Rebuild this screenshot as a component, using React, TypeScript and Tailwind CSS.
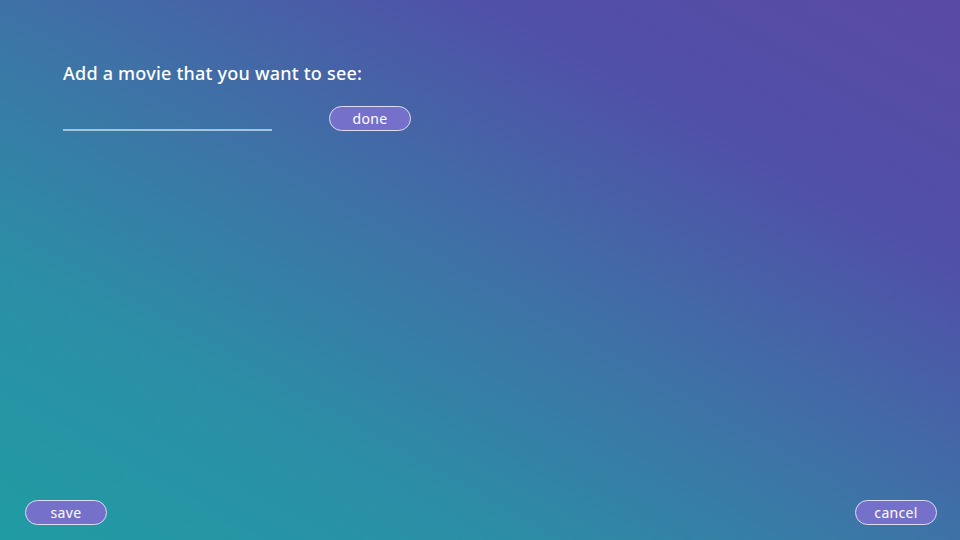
import React, { useState } from "react";

const PillButton = ({ label, onClick }: { label: string; onClick?: () => void }) => {
  return (
    <button
      onClick={onClick}
      className="w-[82px] h-[25px] rounded-full border border-[#dcdcf2] bg-[#7570c9] text-white text-[14px] tracking-[0.3px] leading-none flex items-center justify-center"
    >
      {label}
    </button>
  );
};

export default function App() {
  const [movie, setMovie] = useState("");

  return (
    <div
      className="w-[960px] h-[540px] flex flex-col justify-between bg-[linear-gradient(to_top_right,#209ba3_0%,#2b8fa6_25%,#3e72a6_50%,#5050a8_75%,#5a4aa5_100%)] text-white"
      style={{ fontFamily: '"Noto Sans", "Open Sans", sans-serif' }}
    >
      <div className="pt-[60px] px-[63px]">
        <h1 className="text-[18px] font-medium leading-[26px] tracking-[0.22px]">
          Add a movie that you want to see:
        </h1>
        <div className="flex items-end gap-[57px] mt-[20px]">
          <input
            value={movie}
            onChange={(e) => setMovie(e.target.value)}
            className="w-[209px] h-[24px] bg-transparent border-b-2 border-[#9fc6dd] outline-none text-white text-[14px]"
          />
          <PillButton label="done" />
        </div>
      </div>
      <div className="flex justify-between pl-[25px] pr-[23px] pb-[15px]">
        <PillButton label="save" />
        <PillButton label="cancel" />
      </div>
    </div>
  );
}
